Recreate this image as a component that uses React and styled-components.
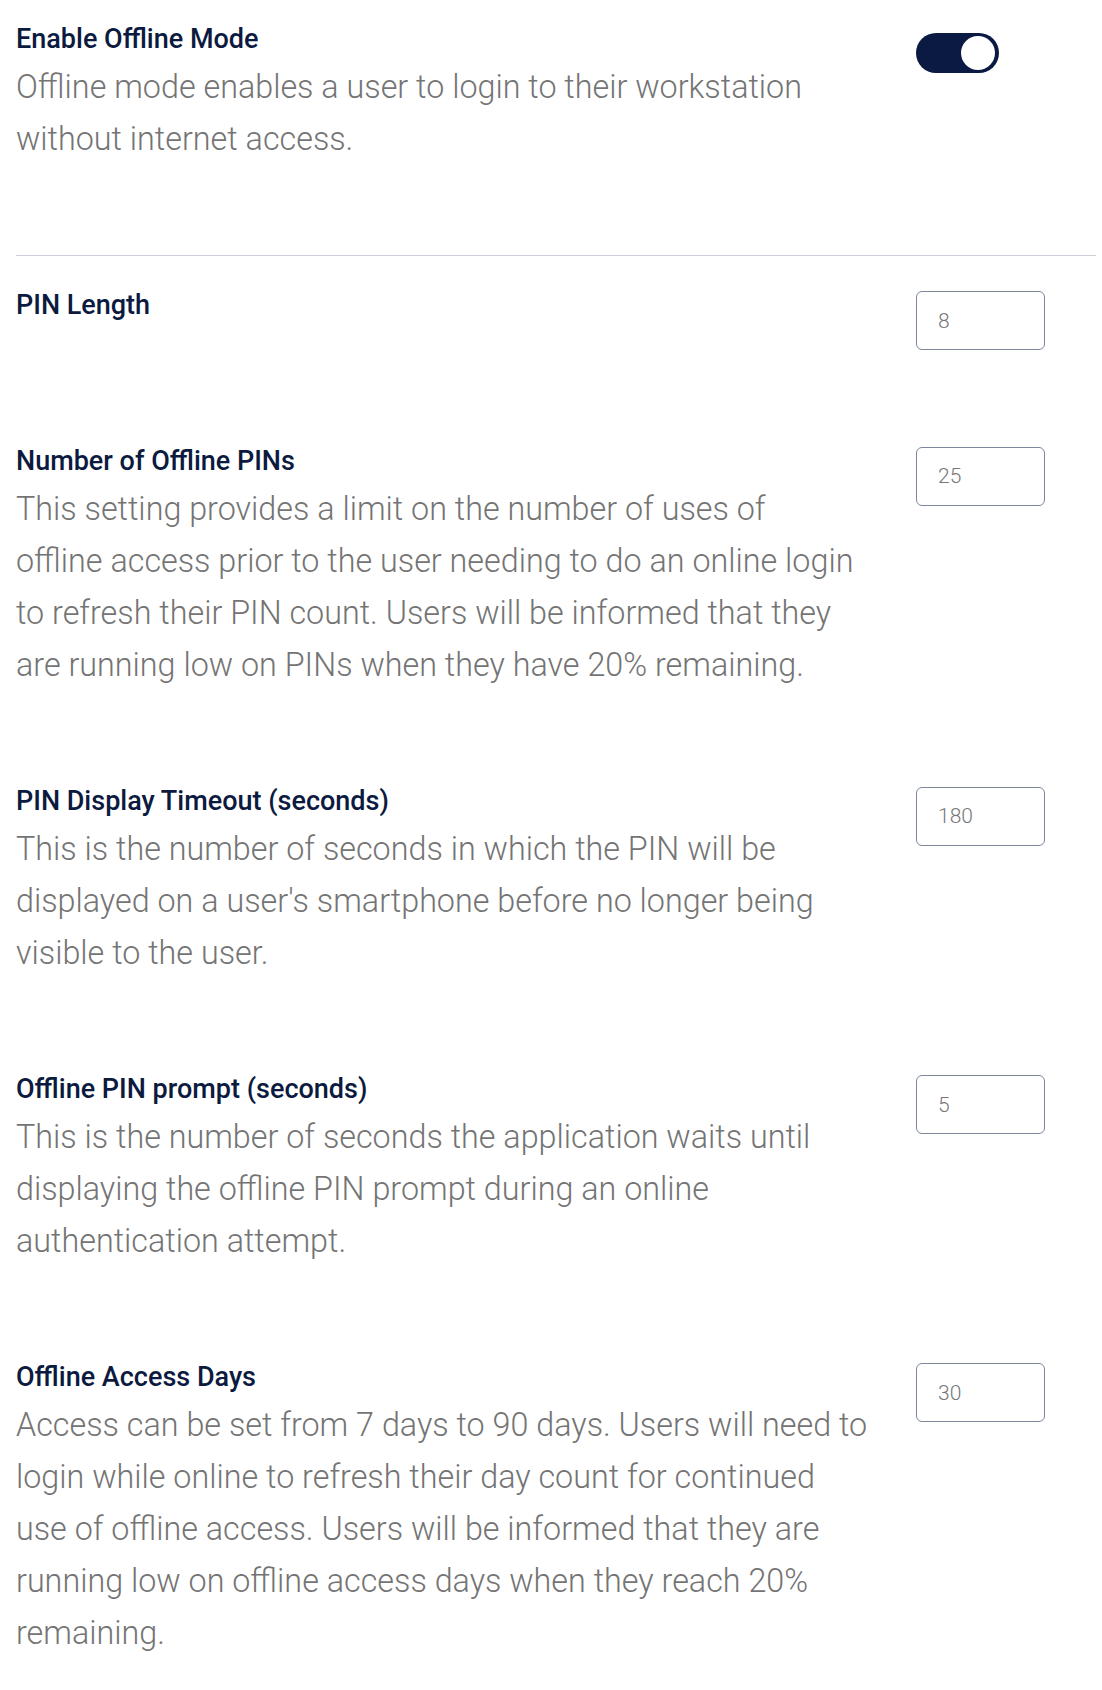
import React, { useState } from "react";
import styled, { createGlobalStyle } from "styled-components";

const GlobalStyle = createGlobalStyle`
  html, body {
    margin: 0;
    padding: 0;
    background: #ffffff;
  }
  * {
    box-sizing: border-box;
  }
`;

const Page = styled.div`
  padding: 17px 6px 0 16px;
  font-family: Roboto, "Liberation Sans", sans-serif;
`;

const Row = styled.div`
  display: flex;
  justify-content: space-between;
  align-items: flex-start;
  padding-top: ${(p) => (p.$afterDivider ? "27px" : "0")};
  padding-bottom: 88.3px;
`;

const Divider = styled.hr`
  margin: 2px 0 0 0;
  border: none;
  border-top: 1px solid #cdd1da;
`;

const TextColumn = styled.div`
  flex: 1;
  min-width: 0;
`;

const Title = styled.h3`
  margin: 0;
  font-size: 27px;
  font-weight: 500;
  line-height: 44px;
  color: #0b1a3e;
  white-space: nowrap;
`;

const Description = styled.p`
  margin: 0;
  font-size: 32.3px;
  font-weight: 300;
  line-height: 52px;
  color: #747474;
`;

const Line = styled.span`
  display: block;
  white-space: nowrap;
`;

const ControlColumn = styled.div`
  width: 129px;
  margin-right: 51px;
  margin-top: ${(p) => p.$offset}px;
  flex-shrink: 0;
`;

const SwitchTrack = styled.button`
  display: flex;
  align-items: center;
  justify-content: ${(p) => (p.$on ? "flex-end" : "flex-start")};
  width: 83px;
  height: 40px;
  padding: 0 4px;
  border: none;
  border-radius: 20px;
  background: ${(p) => (p.$on ? "#0a1a42" : "#c3c8d2")};
  cursor: pointer;
`;

const SwitchKnob = styled.span`
  width: 34px;
  height: 34px;
  border-radius: 50%;
  background: #ffffff;
`;

const NumberInput = styled.input`
  display: block;
  width: 129px;
  height: 59px;
  padding: 0 0 0 21px;
  border: 1px solid #7d879b;
  border-radius: 6px;
  background: #ffffff;
  font-family: Roboto, "Liberation Sans", sans-serif;
  font-size: 21px;
  font-weight: 300;
  color: #777777;
  outline: none;
`;

const settings = [
  {
    title: "PIN Length",
    value: "8",
    lines: [],
  },
  {
    title: "Number of Offline PINs",
    value: "25",
    lines: [
      "This setting provides a limit on the number of uses of",
      "offline access prior to the user needing to do an online login",
      "to refresh their PIN count. Users will be informed that they",
      "are running low on PINs when they have 20% remaining.",
    ],
  },
  {
    title: "PIN Display Timeout (seconds)",
    value: "180",
    lines: [
      "This is the number of seconds in which the PIN will be",
      "displayed on a user's smartphone before no longer being",
      "visible to the user.",
    ],
  },
  {
    title: "Offline PIN prompt (seconds)",
    value: "5",
    lines: [
      "This is the number of seconds the application waits until",
      "displaying the offline PIN prompt during an online",
      "authentication attempt.",
    ],
  },
  {
    title: "Offline Access Days",
    value: "30",
    lines: [
      "Access can be set from 7 days to 90 days. Users will need to",
      "login while online to refresh their day count for continued",
      "use of offline access. Users will be informed that they are",
      "running low on offline access days when they reach 20%",
      "remaining.",
    ],
  },
];

const Text = ({ title, lines }) => (
  <TextColumn>
    <Title>{title}</Title>
    {lines.length > 0 && (
      <Description>
        {lines.map((l) => (
          <Line key={l}>{l}</Line>
        ))}
      </Description>
    )}
  </TextColumn>
);

export default function App() {
  const [offline, setOffline] = useState(true);

  return (
    <Page>
      <GlobalStyle />
      <Row>
        <Text
          title="Enable Offline Mode"
          lines={[
            "Offline mode enables a user to login to their workstation",
            "without internet access.",
          ]}
        />
        <ControlColumn $offset={16}>
          <SwitchTrack
            role="switch"
            aria-checked={offline}
            $on={offline}
            onClick={() => setOffline(!offline)}
          >
            <SwitchKnob />
          </SwitchTrack>
        </ControlColumn>
      </Row>
      <Divider />
      {settings.map((s, i) => (
        <Row key={s.title} $afterDivider={i === 0}>
          <Text title={s.title} lines={s.lines} />
          <ControlColumn $offset={8}>
            <NumberInput type="text" defaultValue={s.value} />
          </ControlColumn>
        </Row>
      ))}
    </Page>
  );
}
